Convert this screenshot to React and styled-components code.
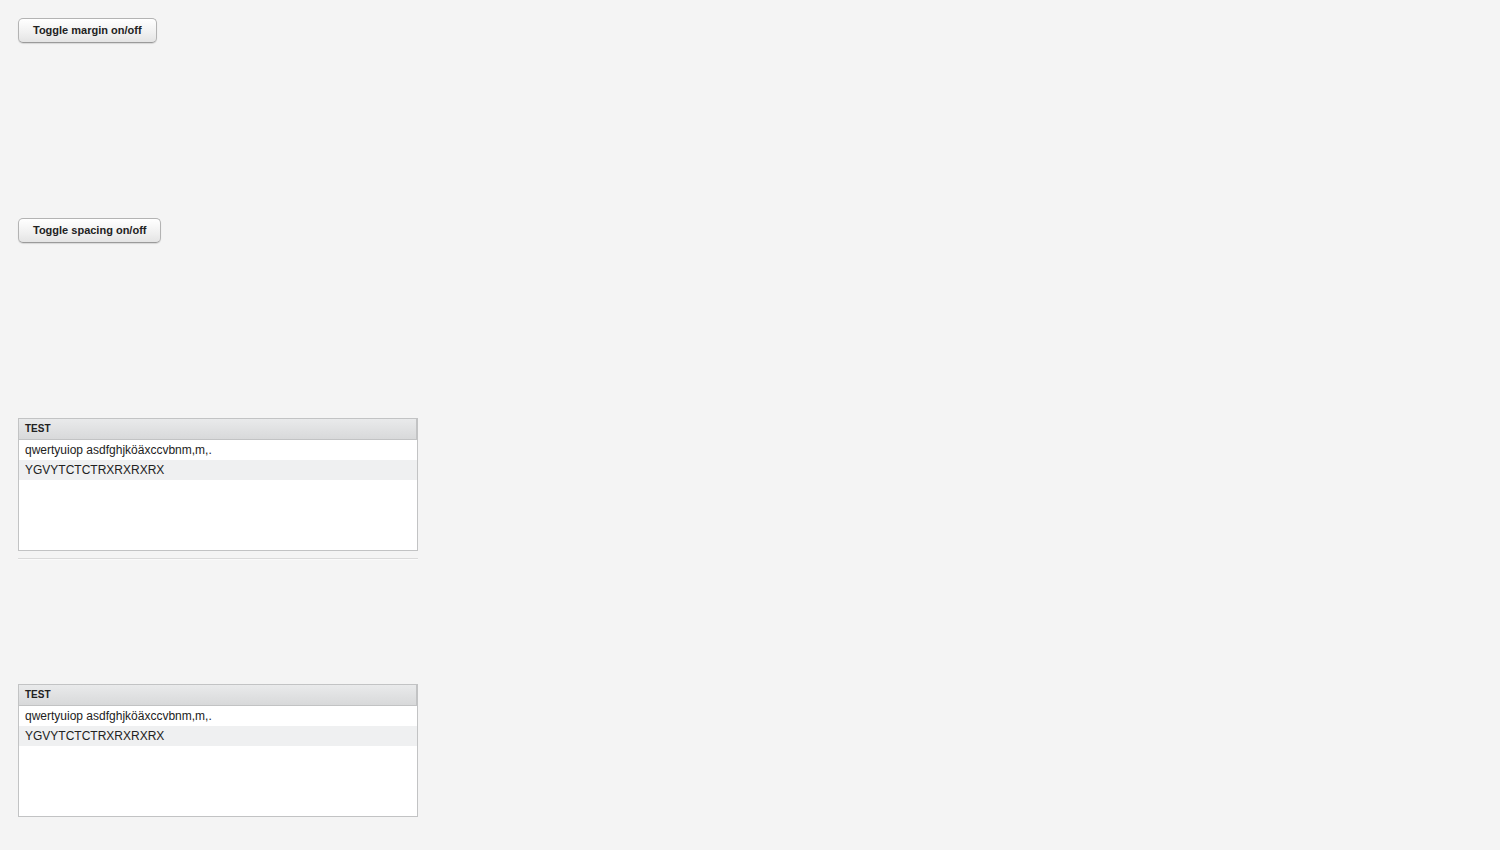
import React from "react";
import styled, { createGlobalStyle } from "styled-components";

const Global = createGlobalStyle`
  html, body { margin: 0; padding: 0; background: #f4f4f4; }
  body { font-family: "Liberation Sans", Arial, sans-serif; }
`;

const Page = styled.div`
  display: flex;
  flex-direction: column;
  align-items: flex-start;
  padding: 18px;
`;

const Slot = styled.div`
  height: ${(p) => p.$h}px;
  display: flex;
  flex-direction: column;
  align-items: flex-start;
`;

const Button = styled.button`
  height: 25px;
  padding: 0 14px 2px;
  border: 1px solid #b3b3b3;
  border-bottom-color: #9a9a9a;
  border-radius: 5px;
  background: linear-gradient(#ffffff, #f0f0f0 60%, #e4e4e4);
  box-shadow: 0 1px 1px rgba(0, 0, 0, 0.12);
  font-family: "Liberation Sans", Arial, sans-serif;
  font-weight: bold;
  font-size: 11px;
  color: #222;
  cursor: pointer;
`;

const Table = styled.div`
  width: 398px;
  height: 131px;
  border: 1px solid #c2c3c4;
  background: #fff;
  display: flex;
  flex-direction: column;
`;

const Header = styled.div`
  height: 20px;
  border-bottom: 1px solid #c2c3c4;
  background: linear-gradient(#e9eaeb, #d8d9da);
  display: flex;
  align-items: center;
  padding-left: 6px;
  padding-bottom: 1px;
  box-sizing: border-box;
  height: 21px;
  font-size: 10px;
  font-weight: bold;
  color: #222;
  box-shadow: inset -1px 0 0 #c2c3c4;
`;

const Row = styled.div`
  height: 20px;
  display: flex;
  align-items: center;
  padding-left: 6px;
  padding-bottom: 1px;
  box-sizing: border-box;
  font-size: 12px;
  color: #222;
  background: ${(p) => (p.$odd ? "#eff0f1" : "#fff")};
`;

const Rule = styled.div`
  width: 400px;
  height: 1px;
  background: #dadada;
  border-bottom: 1px solid #fafafa;
  margin-top: 7px;
`;

const rows = ["qwertyuiop asdfghjköäxccvbnm,m,.", "YGVYTCTCTRXRXRXRX"];

function DataTable() {
  return (
    <Table>
      <Header>TEST</Header>
      {rows.map((r, i) => (
        <Row key={i} $odd={i % 2 === 1}>
          {r}
        </Row>
      ))}
    </Table>
  );
}

export default function App() {
  return (
    <>
      <Global />
      <Page>
        <Slot $h={200}>
          <Button>Toggle margin on/off</Button>
        </Slot>
        <Slot $h={200}>
          <Button>Toggle spacing on/off</Button>
        </Slot>
        <Slot $h={266}>
          <DataTable />
          <Rule />
        </Slot>
        <Slot $h={133}>
          <DataTable />
        </Slot>
      </Page>
    </>
  );
}
